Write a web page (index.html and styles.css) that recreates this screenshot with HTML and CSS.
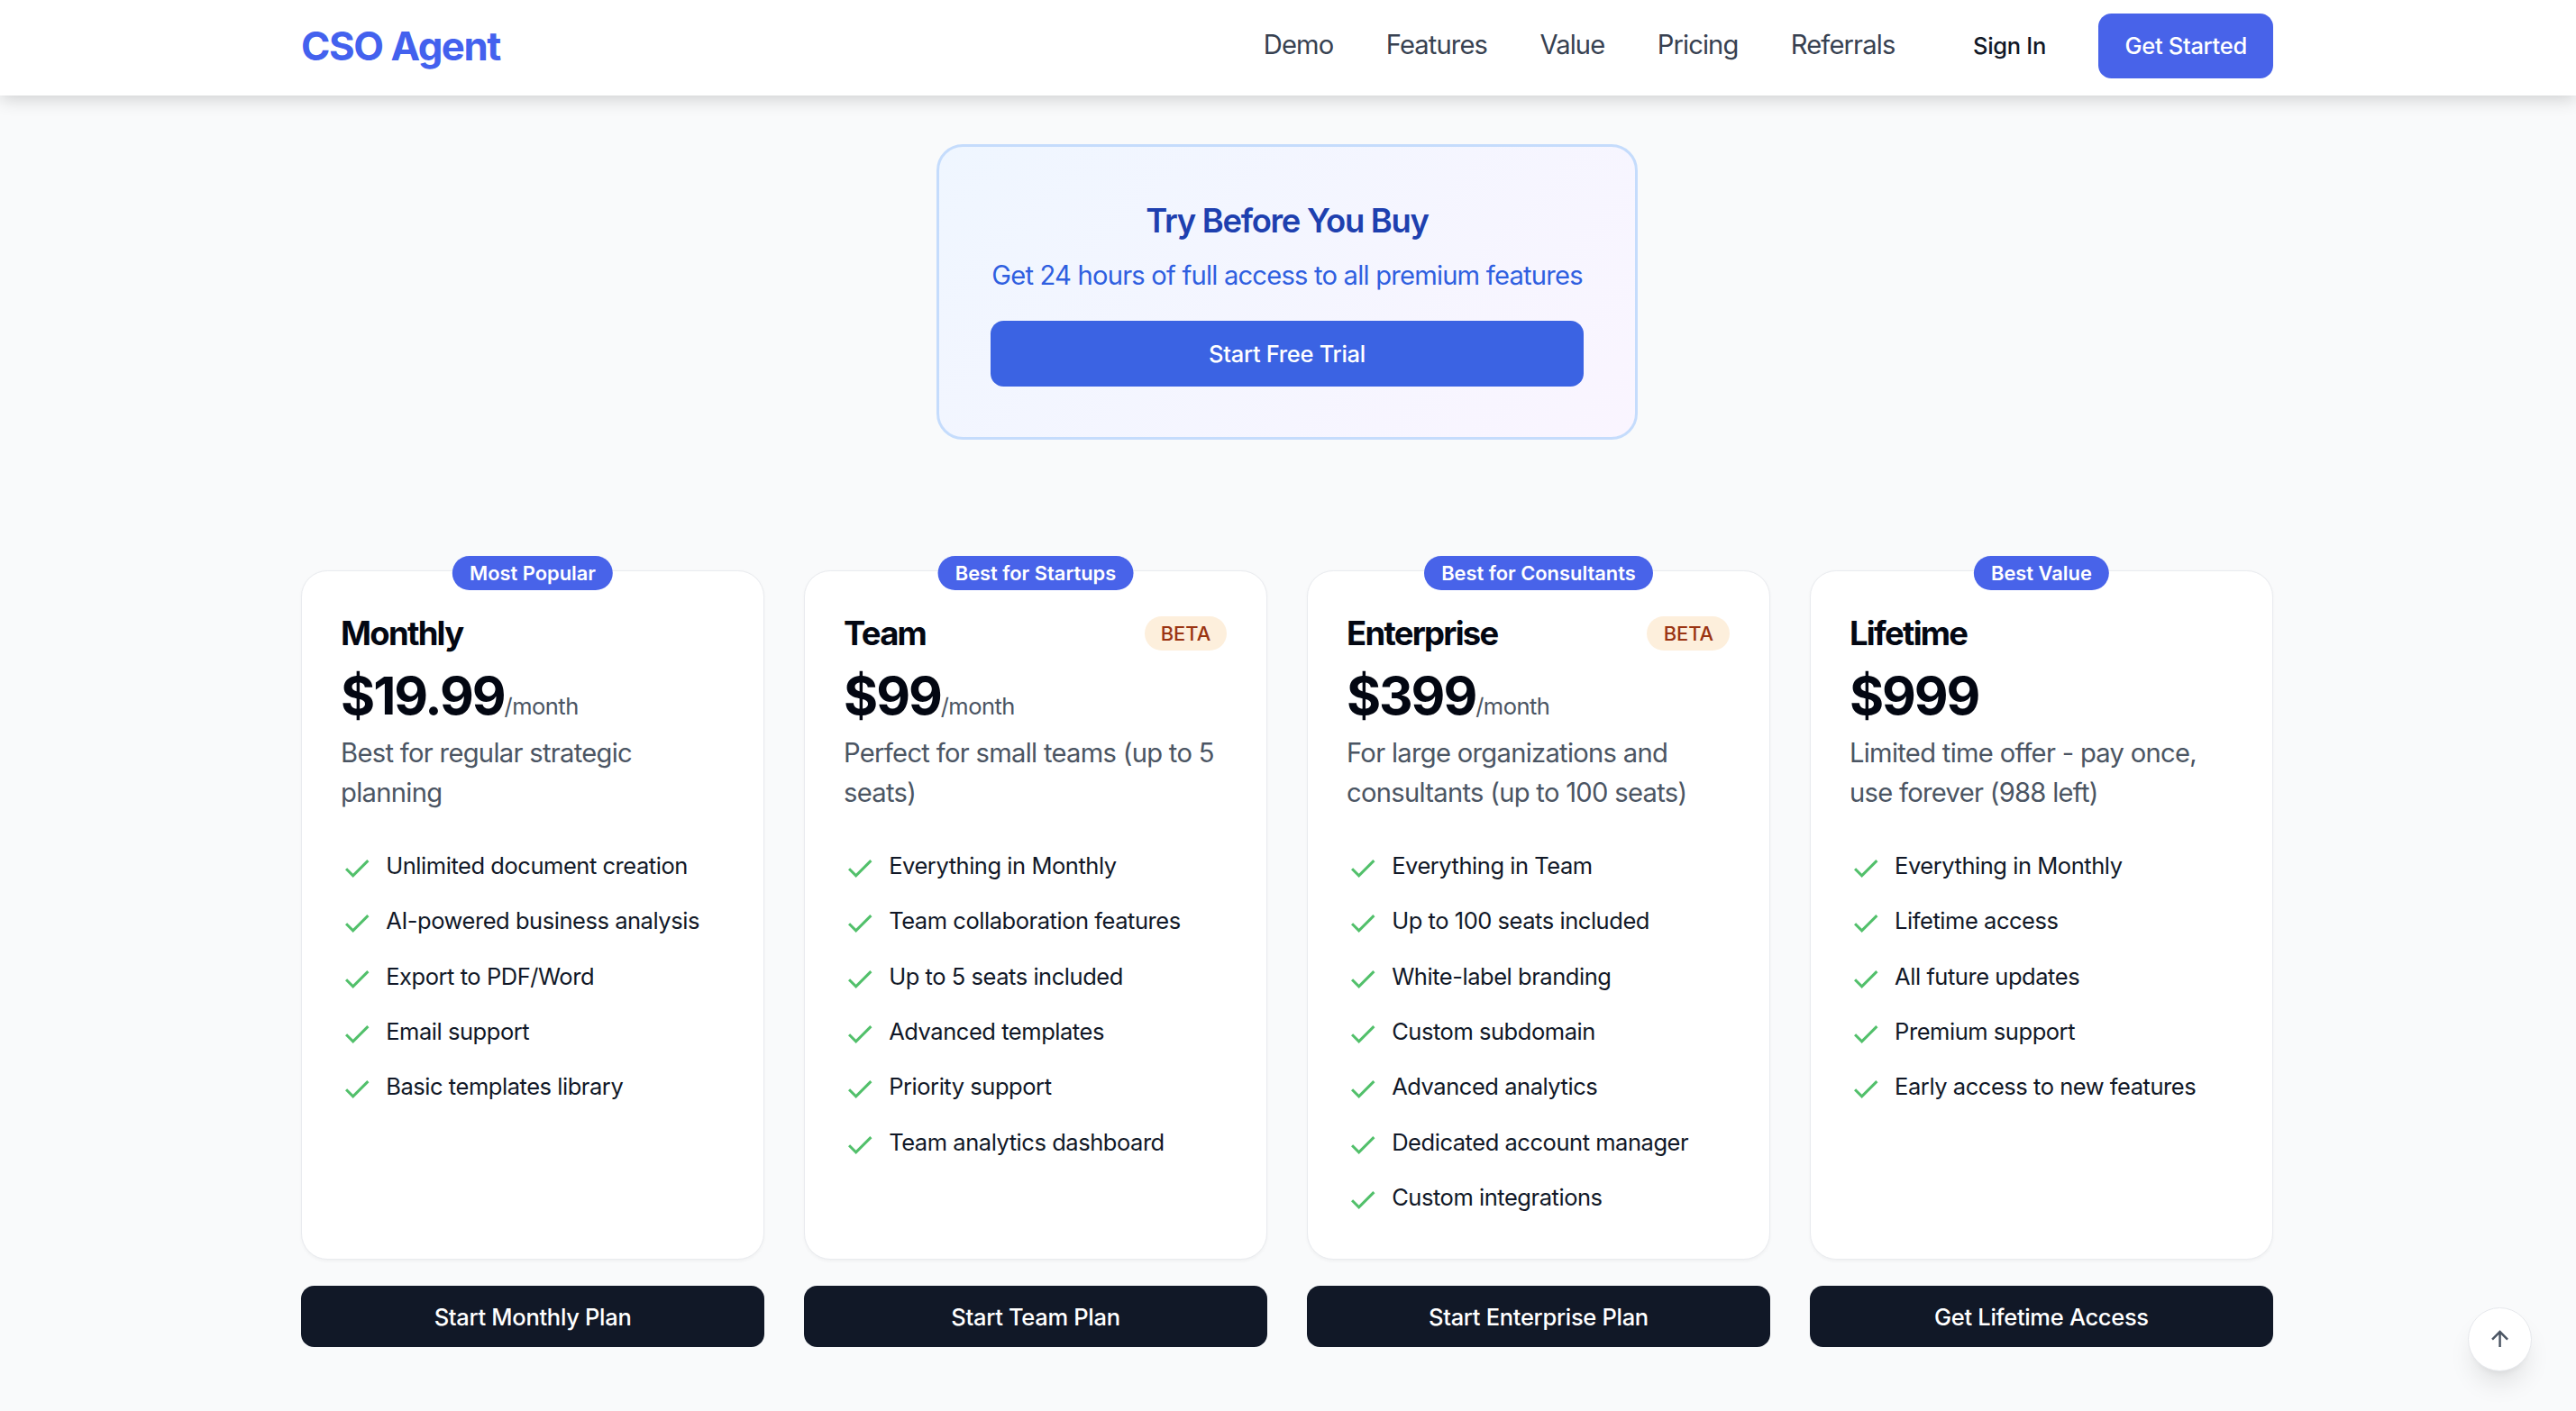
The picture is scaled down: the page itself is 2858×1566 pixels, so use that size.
FILE: index.html
```html
<!DOCTYPE html>
<html lang="en">
<head>
  <meta charset="UTF-8">
  <title>CSO Agent - Pricing</title>
  <link rel="stylesheet" href="styles.css">
</head>
<body>
  <header class="site-header">
    <div class="container header-row">
      <a class="logo" href="#">CSO Agent</a>
      <nav class="main-nav">
        <a href="#">Demo</a>
        <a href="#">Features</a>
        <a href="#">Value</a>
        <a href="#">Pricing</a>
        <a href="#">Referrals</a>
      </nav>
      <div class="header-actions">
        <a class="sign-in" href="#">Sign In</a>
        <a class="get-started" href="#">Get Started</a>
      </div>
    </div>
  </header>

  <main class="container">
    <section class="trial-box">
      <h2>Try Before You Buy</h2>
      <p>Get 24 hours of full access to all premium features</p>
      <button class="trial-btn">Start Free Trial</button>
    </section>

    <section class="plans">
      <div class="plan">
        <div class="card">
          <span class="tag">Most Popular</span>
          <div class="plan-head"><h3>Monthly</h3></div>
          <div class="price">$19.99<span>/month</span></div>
          <p class="desc">Best for regular strategic planning</p>
          <ul class="features">
            <li><svg viewBox="0 0 24 24"><path d="M20 6 9 17l-5-5"/></svg>Unlimited document creation</li>
            <li><svg viewBox="0 0 24 24"><path d="M20 6 9 17l-5-5"/></svg>AI-powered business analysis</li>
            <li><svg viewBox="0 0 24 24"><path d="M20 6 9 17l-5-5"/></svg>Export to PDF/Word</li>
            <li><svg viewBox="0 0 24 24"><path d="M20 6 9 17l-5-5"/></svg>Email support</li>
            <li><svg viewBox="0 0 24 24"><path d="M20 6 9 17l-5-5"/></svg>Basic templates library</li>
          </ul>
        </div>
        <button class="plan-btn">Start Monthly Plan</button>
      </div>

      <div class="plan">
        <div class="card">
          <span class="tag">Best for Startups</span>
          <div class="plan-head"><h3>Team</h3><span class="beta">BETA</span></div>
          <div class="price">$99<span>/month</span></div>
          <p class="desc">Perfect for small teams (up to 5 seats)</p>
          <ul class="features">
            <li><svg viewBox="0 0 24 24"><path d="M20 6 9 17l-5-5"/></svg>Everything in Monthly</li>
            <li><svg viewBox="0 0 24 24"><path d="M20 6 9 17l-5-5"/></svg>Team collaboration features</li>
            <li><svg viewBox="0 0 24 24"><path d="M20 6 9 17l-5-5"/></svg>Up to 5 seats included</li>
            <li><svg viewBox="0 0 24 24"><path d="M20 6 9 17l-5-5"/></svg>Advanced templates</li>
            <li><svg viewBox="0 0 24 24"><path d="M20 6 9 17l-5-5"/></svg>Priority support</li>
            <li><svg viewBox="0 0 24 24"><path d="M20 6 9 17l-5-5"/></svg>Team analytics dashboard</li>
          </ul>
        </div>
        <button class="plan-btn">Start Team Plan</button>
      </div>

      <div class="plan">
        <div class="card">
          <span class="tag">Best for Consultants</span>
          <div class="plan-head"><h3>Enterprise</h3><span class="beta">BETA</span></div>
          <div class="price">$399<span>/month</span></div>
          <p class="desc">For large organizations and consultants (up to 100 seats)</p>
          <ul class="features">
            <li><svg viewBox="0 0 24 24"><path d="M20 6 9 17l-5-5"/></svg>Everything in Team</li>
            <li><svg viewBox="0 0 24 24"><path d="M20 6 9 17l-5-5"/></svg>Up to 100 seats included</li>
            <li><svg viewBox="0 0 24 24"><path d="M20 6 9 17l-5-5"/></svg>White-label branding</li>
            <li><svg viewBox="0 0 24 24"><path d="M20 6 9 17l-5-5"/></svg>Custom subdomain</li>
            <li><svg viewBox="0 0 24 24"><path d="M20 6 9 17l-5-5"/></svg>Advanced analytics</li>
            <li><svg viewBox="0 0 24 24"><path d="M20 6 9 17l-5-5"/></svg>Dedicated account manager</li>
            <li><svg viewBox="0 0 24 24"><path d="M20 6 9 17l-5-5"/></svg>Custom integrations</li>
          </ul>
        </div>
        <button class="plan-btn">Start Enterprise Plan</button>
      </div>

      <div class="plan">
        <div class="card">
          <span class="tag">Best Value</span>
          <div class="plan-head"><h3>Lifetime</h3></div>
          <div class="price">$999</div>
          <p class="desc">Limited time offer - pay once, use forever (988 left)</p>
          <ul class="features">
            <li><svg viewBox="0 0 24 24"><path d="M20 6 9 17l-5-5"/></svg>Everything in Monthly</li>
            <li><svg viewBox="0 0 24 24"><path d="M20 6 9 17l-5-5"/></svg>Lifetime access</li>
            <li><svg viewBox="0 0 24 24"><path d="M20 6 9 17l-5-5"/></svg>All future updates</li>
            <li><svg viewBox="0 0 24 24"><path d="M20 6 9 17l-5-5"/></svg>Premium support</li>
            <li><svg viewBox="0 0 24 24"><path d="M20 6 9 17l-5-5"/></svg>Early access to new features</li>
          </ul>
        </div>
        <button class="plan-btn">Get Lifetime Access</button>
      </div>
    </section>
  </main>

  <button class="to-top" aria-label="Back to top">
    <svg viewBox="0 0 24 24"><path d="M12 19V5M5 12l7-7 7 7"/></svg>
  </button>
</body>
</html>
```

FILE: styles.css
```css
/* the page is sized in rem, 1rem = one 16px step at the screenshot's scale */
html {
  font-size: 29.163px;
}

* {
  box-sizing: border-box;
}

body {
  margin: 0;
  height: 100vh;
  overflow: hidden;
  font-family: Inter, "Noto Sans", sans-serif;
  font-size: 1rem;
  background-color: #f9fafb;
  color: #111827;
}

a {
  text-decoration: none;
  color: inherit;
}

button {
  font-family: inherit;
  border: none;
  cursor: pointer;
}

.container {
  width: 75.03rem;
  margin-left: calc(50% - 37.515rem - 1px);
}

.site-header {
  height: 3.625rem;
  padding-bottom: 0.125rem;
  background-color: #fff;
  box-shadow: 0 0.1875rem 0.625rem rgba(0, 0, 0, 0.17);
}

.header-row {
  height: 100%;
  display: flex;
  align-items: center;
  justify-content: space-between;
}

.logo {
  font-size: 1.5rem;
  font-weight: 700;
  letter-spacing: -0.032em;
  color: #4361ee;
}

.main-nav {
  display: flex;
  gap: 2rem;
  margin-left: auto;
  margin-bottom: 0.125rem;
  letter-spacing: -0.03em;
  color: #374151;
}

.header-actions {
  display: flex;
  align-items: center;
  gap: 2rem;
  margin-left: 2.97rem;
  font-size: 0.875rem;
  font-weight: 500;
  letter-spacing: -0.012em;
}

.sign-in {
  margin-bottom: 0.0625rem;
}

.get-started {
  display: block;
  padding: 0.6rem 1rem;
  line-height: 1.25rem;
  border-radius: 0.5rem;
  background-color: #4863e9;
  color: #fff;
}

.trial-box {
  width: 26.6875rem;
  height: 11.25rem;
  margin: 1.875rem auto 0;
  padding: 1.95rem;
  border: 3px solid #c5dcfc;
  border-radius: 1rem;
  background: linear-gradient(135deg, #eff6ff, #faf5ff);
  text-align: center;
}

.trial-box h2 {
  margin: 0 0 0.45rem;
  font-size: 1.25rem;
  line-height: 1.75rem;
  font-weight: 600;
  letter-spacing: -0.036em;
  color: #1e40af;
}

.trial-box p {
  margin: 0 0 0.95rem;
  line-height: 1.5rem;
  letter-spacing: -0.027em;
  color: #2f5fe0;
  white-space: nowrap;
}

.trial-btn {
  width: 100%;
  height: 2.5rem;
  border-radius: 0.5rem;
  background-color: #3b63e3;
  color: #fff;
  font-size: 0.875rem;
  font-weight: 500;
  letter-spacing: -0.012em;
}

.plans {
  display: grid;
  grid-template-columns: repeat(4, 1fr);
  gap: 1.5rem;
  margin-top: 4.94rem;
}

.plan {
  display: flex;
  flex-direction: column;
  gap: 1rem;
}

.card {
  position: relative;
  flex: 1;
  padding: 1.5rem 1.5rem 1.68rem 1.48rem;
  background-color: #fff;
  border: 0.0625rem solid #e9ebef;
  border-radius: 1rem;
  box-shadow: 0 0.0625rem 0.125rem rgba(0, 0, 0, 0.04);
}

.tag {
  position: absolute;
  top: -0.5625rem;
  left: 50%;
  transform: translateX(-50%);
  padding: 0 0.66rem;
  line-height: 1.3125rem;
  border-radius: 1rem;
  background-color: #4863e9;
  color: #fff;
  font-size: 0.75rem;
  font-weight: 600;
  white-space: nowrap;
}

.plan-head {
  display: flex;
  align-items: center;
  justify-content: space-between;
  height: 1.75rem;
}

.plan-head h3 {
  margin: 0;
  font-size: 1.25rem;
  font-weight: 700;
  letter-spacing: -0.047em;
  color: #030712;
}

.beta {
  padding: 0 0.625rem;
  line-height: 1.3125rem;
  border-radius: 1rem;
  background-color: #fdefdc;
  color: #9a3412;
  font-size: 0.75rem;
  font-weight: 500;
}

.price {
  display: flex;
  align-items: baseline;
  margin-top: 0.25rem;
  font-size: 2rem;
  line-height: 2.5rem;
  font-weight: 700;
  letter-spacing: -0.036em;
  color: #030712;
}

.price span {
  font-size: 0.875rem;
  line-height: 1;
  font-weight: 400;
  letter-spacing: -0.02em;
  color: #4b5563;
}

.desc {
  margin: 0.19rem 0 1.34rem;
  line-height: 1.5rem;
  letter-spacing: -0.024em;
  color: #4b5563;
}

.features {
  list-style: none;
  margin: 0;
  padding: 0;
  display: flex;
  flex-direction: column;
  gap: 0.75rem;
}

.features li {
  display: flex;
  align-items: center;
  height: 1.355rem;
  font-size: 0.875rem;
  letter-spacing: -0.018em;
  color: #111827;
}

.features svg {
  flex: none;
  width: 1.25rem;
  height: 1.25rem;
  margin-top: 0.25rem;
  margin-right: 0.47rem;
  fill: none;
  stroke: #52c06b;
  stroke-width: 2;
}

.plan-btn {
  height: 2.3rem;
  border-radius: 0.5rem;
  background-color: #111827;
  color: #fff;
  font-size: 0.875rem;
  font-weight: 500;
  letter-spacing: -0.012em;
}

.to-top {
  position: fixed;
  right: 1.6875rem;
  bottom: 1.5rem;
  width: 2.4375rem;
  height: 2.4375rem;
  padding: 0;
  display: flex;
  align-items: center;
  justify-content: center;
  border-radius: 50%;
  border: 0.0625rem solid #e5e7eb;
  background-color: #fff;
  box-shadow: 0 0.625rem 0.9375rem -0.1875rem rgba(0, 0, 0, 0.1), 0 0.25rem 0.375rem -0.25rem rgba(0, 0, 0, 0.1);
}

.to-top svg {
  width: 1rem;
  height: 1rem;
  fill: none;
  stroke: #4b5563;
  stroke-width: 2;
}
```
